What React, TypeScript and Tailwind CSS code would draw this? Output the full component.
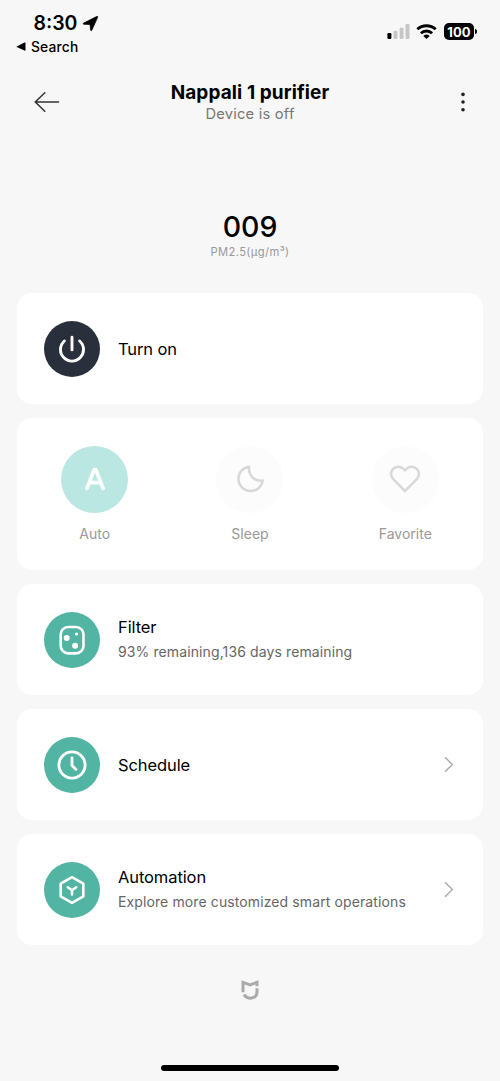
import { ReactNode } from 'react';

interface DeviceCardProps {
  icon: ReactNode;
  title: string;
  subtitle?: string;
  dark?: boolean;
  arrow?: boolean;
}

function DeviceCard({ icon, title, subtitle, dark, arrow }: DeviceCardProps) {
  return (
    <section className="flex h-[110.75px] shrink-0 items-center rounded-[15px] bg-white pl-[27px] pr-[29px]">
      <div
        className={`flex size-14 shrink-0 items-center justify-center rounded-full ${dark ? 'bg-[#29303b]' : 'bg-[#52b4a3]'}`}
      >
        {icon}
      </div>
      <div className="ml-[18px] flex-1 whitespace-nowrap">
        <h2 className="text-[16.5px] leading-[22px] tracking-[-0.1px] text-black">{title}</h2>
        {subtitle && (
          <p className="mt-[3px] text-[14px] leading-[22px] tracking-[0.11px] text-[#666]">{subtitle}</p>
        )}
      </div>
      {arrow && (
        <svg width="10" height="17" viewBox="0 0 10 17" fill="none" stroke="#aaa" strokeWidth="1.4">
          <path d="M1 1.2l7.4 7.3L1 15.8" />
        </svg>
      )}
    </section>
  );
}

interface ModeProps {
  label: string;
  active?: boolean;
  children: ReactNode;
}

function Mode({ label, active, children }: ModeProps) {
  return (
    <div className="flex flex-1 flex-col items-center">
      <div
        className={`flex size-[67px] items-center justify-center rounded-full ${active ? 'bg-[#bae7e1]' : 'bg-[#fcfcfc]'}`}
      >
        {children}
      </div>
      <span className="mt-[11px] text-[14px] leading-[20px] text-[#999]">{label}</span>
    </div>
  );
}

function StatusBar() {
  return (
    <div className="flex h-[64px] shrink-0 justify-between">
      <div className="pl-[16px] pt-[10px]">
        <div className="flex h-[26px] items-center pl-[17.5px]">
          <span className="text-[19.5px] font-semibold leading-[26px]">8:30</span>
          <svg className="ml-[4.5px]" width="17" height="17" viewBox="0 0 17 17">
            <path
              d="M1.7 8.1L14.6 1.5c.9-.4 1.4.1 1 1L9.9 15.1c-.4.9-1.2.8-1.3-.1L8 9.5 1.9 9.3C.9 9.2.8 8.5 1.7 8.1z"
              fill="#000"
              stroke="#000"
              strokeWidth="0.7"
            />
          </svg>
        </div>
        <div className="flex h-[22px] items-center">
          <svg width="10" height="10" viewBox="0 0 10 10">
            <path d="M0.7 4.5L8.5.6Q9.5.2 9.5 1.2V8q0 1-1 .6L.7 5.1Q.2 4.8.7 4.5z" fill="#000" />
          </svg>
          <span className="ml-[5px] text-[13.8px] font-medium leading-[20px] tracking-[0.2px]">Search</span>
        </div>
      </div>
      <div className="flex h-[17px] pr-[23px] pt-[23px]">
        <svg width="23" height="17" viewBox="0 0 23 17">
          <rect x="0.4" y="10" width="4" height="6" rx="1.2" fill="#000" />
          <rect x="6.5" y="7.8" width="4" height="8.2" rx="1.2" fill="#c6c6c6" />
          <rect x="12.6" y="4.8" width="4" height="11.2" rx="1.2" fill="#c6c6c6" />
          <rect x="18.5" y="1" width="4" height="15" rx="1.2" fill="#c6c6c6" />
        </svg>
        <svg className="ml-[6px]" width="21" height="17" viewBox="0 0 21 17" fill="none" stroke="#000" strokeWidth="2.9">
          <path d="M1.3 6.3a13.5 13.5 0 0 1 18.4 0" />
          <path d="M4.9 10.2a8.3 8.3 0 0 1 11.2 0" />
          <path d="M10.5 16L7.3 12.9a4.8 4.8 0 0 1 6.4 0z" fill="#000" stroke="none" />
        </svg>
        <div className="ml-[7px] flex h-[17px] w-[30px] items-center justify-center rounded-[5px] bg-black pt-px text-[13px] font-bold leading-[16px] tracking-[0.1px] text-white">
          100
        </div>
        <div className="ml-[1px] mt-[6px] h-[5px] w-[2px] rounded-r-full bg-black" />
      </div>
    </div>
  );
}

export default function App() {
  return (
    <div className="flex h-[1081px] w-[500px] flex-col overflow-hidden bg-[#f7f7f7] font-['Inter','Liberation_Sans',sans-serif] text-black">
      <StatusBar />

      <header className="grid h-[76px] shrink-0 grid-cols-[60px_1fr_60px] items-center px-[34px]">
        <svg width="26" height="20" viewBox="0 0 26 20" fill="none" stroke="#333" strokeWidth="1.5" strokeLinecap="round">
          <path d="M10.8 .8L1.3 10l9.5 9.2M1.3 10H24.5" />
        </svg>
        <div className="pt-[2px] text-center">
          <h1 className="text-[19px] font-bold leading-[23px] tracking-[0.1px]">Nappali 1 purifier</h1>
          <p className="text-[14.7px] leading-[21px] tracking-[0.22px] text-[#777]">Device is off</p>
        </div>
        <svg className="justify-self-end" width="6" height="20" viewBox="0 0 6 20" fill="#222">
          <circle cx="3" cy="2.4" r="1.8" />
          <circle cx="3" cy="10" r="1.8" />
          <circle cx="3" cy="17.7" r="1.8" />
        </svg>
      </header>

      <div className="flex h-[153.4px] shrink-0 flex-col items-center pt-[70px]">
        <div className="text-[28.5px] font-medium leading-[34px]">009</div>
        <div className="mt-px text-[11.2px] leading-[14px] tracking-[0.4px] text-[#999]">PM2.5(μg/m³)</div>
      </div>

      <main className="flex flex-col gap-[14.25px] px-[17px]">
        <DeviceCard
          dark
          title="Turn on"
          icon={
            <svg width="28" height="28" viewBox="0 0 28 28" fill="none" stroke="#fff" strokeWidth="2.9" strokeLinecap="round">
              <path d="M14 2.3v12.6M6.4 6a11.5 11.5 0 1 0 15.2 0" />
            </svg>
          }
        />

        <section className="flex h-[151.75px] shrink-0 rounded-[15px] bg-white pt-[27.5px]">
          <Mode label="Auto" active>
            <svg width="22" height="24" viewBox="0 0 22 24" fill="none" stroke="#fff" strokeWidth="3.7" strokeLinecap="round" strokeLinejoin="round">
              <path d="M2.9 21.4L10.2 2.7h1.6l7.3 18.7M6 15.6h10" />
            </svg>
          </Mode>
          <Mode label="Sleep">
            <svg width="28" height="28" viewBox="0 0 28 28" fill="none" stroke="#d8d8d8" strokeWidth="2.5" strokeLinejoin="round">
              <path d="M13.1 1.7A12.2 12.2 0 1 0 26.7 15.5C18 16.9 12 9.5 13.1 1.7z" />
            </svg>
          </Mode>
          <Mode label="Favorite">
            <svg width="32" height="28" viewBox="0 0 32 28" fill="none" stroke="#d8d8d8" strokeWidth="2.5">
              <path d="M16 26L4.2 14.2A7.3 7.3 0 0 1 14.5 3.8L16 5.3l1.5-1.5a7.3 7.3 0 0 1 10.3 10.4z" />
            </svg>
          </Mode>
        </section>

        <DeviceCard
          title="Filter"
          subtitle="93% remaining,136 days remaining"
          icon={
            <svg width="28" height="30" viewBox="0 0 28 30" fill="none">
              <rect x="2.7" y="2" width="22.8" height="26.4" rx="7.5" stroke="#fff" strokeWidth="2.6" />
              <circle cx="8.7" cy="13" r="3" fill="#fff" />
              <circle cx="18.5" cy="9" r="1.6" fill="#fff" />
              <circle cx="17.1" cy="20.7" r="3" fill="#fff" />
            </svg>
          }
        />

        <DeviceCard
          arrow
          title="Schedule"
          icon={
            <svg width="30" height="30" viewBox="0 0 30 30" fill="none" stroke="#fff" strokeWidth="2.8" strokeLinecap="round" strokeLinejoin="round">
              <circle cx="15" cy="15" r="13.1" />
              <path d="M15 8v7.4l4 4" />
            </svg>
          }
        />

        <DeviceCard
          arrow
          title="Automation"
          subtitle="Explore more customized smart operations"
          icon={
            <svg width="28" height="30" viewBox="0 0 28 30" fill="none" stroke="#fff" strokeWidth="2.6" strokeLinecap="round" strokeLinejoin="round">
              <path d="M14 2.2l11.3 6.4v12.8L14 27.8 2.7 21.4V8.6z" />
              <path d="M9.8 12.3l4.2 2.9 4.2-2.9M14 15.2v4.3" />
            </svg>
          }
        />
      </main>

      <footer className="flex flex-1 flex-col items-center justify-between pb-[10px] pt-[34.5px]">
        <svg width="18" height="20" viewBox="0 0 18 20" fill="none" stroke="#aaa" strokeWidth="3">
          <path d="M2 12.2V2.4L9 4.8l7-2.4V6.2" />
          <path d="M16 8.2V12c0 6.9-9.7 8.2-13 2.6" />
        </svg>
        <div className="h-[6px] w-[178px] rounded-full bg-black" />
      </footer>
    </div>
  );
}
